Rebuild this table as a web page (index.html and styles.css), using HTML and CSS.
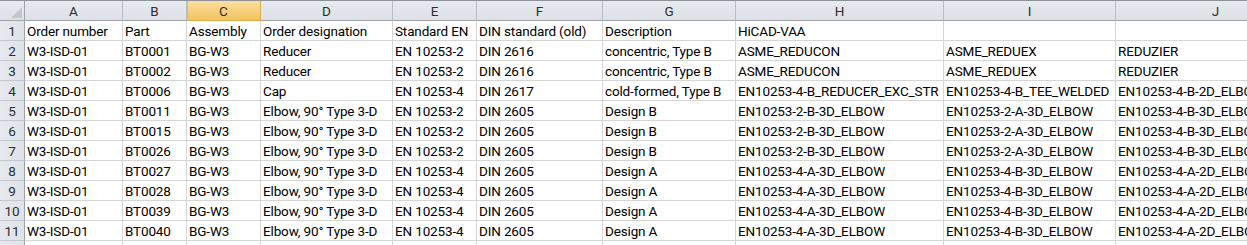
FILE: index.html
```html
<!DOCTYPE html>
<html>
<head>
<meta charset="utf-8">
<link rel="stylesheet" href="styles.css">
</head>
<body>
<div class="sheet">
  <div class="hdr corner"><svg class="tri" width="11" height="11" viewBox="0 0 11 11"><polygon points="11,0 11,11 0,11" fill="#c3c7cc"/></svg></div>
  <div class="hdr">A</div><div class="hdr">B</div><div class="hdr sel">C</div><div class="hdr">D</div><div class="hdr">E</div><div class="hdr">F</div><div class="hdr">G</div><div class="hdr">H</div><div class="hdr">I</div><div class="hdr">J</div>

  <div class="rh">1</div><div class="c">Order number</div><div class="c">Part</div><div class="c">Assembly</div><div class="c">Order designation</div><div class="c">Standard EN</div><div class="c">DIN standard (old)</div><div class="c">Description</div><div class="c">HiCAD-VAA</div><div class="c"></div><div class="c"></div>

  <div class="rh">2</div><div class="c">W3-ISD-01</div><div class="c">BT0001</div><div class="c">BG-W3</div><div class="c">Reducer</div><div class="c">EN 10253-2</div><div class="c">DIN 2616</div><div class="c">concentric, Type B</div><div class="c">ASME_REDUCON</div><div class="c">ASME_REDUEX</div><div class="c">REDUZIER</div>

  <div class="rh">3</div><div class="c">W3-ISD-01</div><div class="c">BT0002</div><div class="c">BG-W3</div><div class="c">Reducer</div><div class="c">EN 10253-2</div><div class="c">DIN 2616</div><div class="c">concentric, Type B</div><div class="c">ASME_REDUCON</div><div class="c">ASME_REDUEX</div><div class="c">REDUZIER</div>

  <div class="rh">4</div><div class="c">W3-ISD-01</div><div class="c">BT0006</div><div class="c">BG-W3</div><div class="c">Cap</div><div class="c">EN 10253-4</div><div class="c">DIN 2617</div><div class="c">cold-formed, Type B</div><div class="c">EN10253-4-B_REDUCER_EXC_STR</div><div class="c">EN10253-4-B_TEE_WELDED</div><div class="c">EN10253-4-B-2D_ELBOW</div>

  <div class="rh">5</div><div class="c">W3-ISD-01</div><div class="c">BT0011</div><div class="c">BG-W3</div><div class="c">Elbow, 90° Type 3-D</div><div class="c">EN 10253-2</div><div class="c">DIN 2605</div><div class="c">Design B</div><div class="c">EN10253-2-B-3D_ELBOW</div><div class="c">EN10253-2-A-3D_ELBOW</div><div class="c">EN10253-4-B-3D_ELBOW</div>

  <div class="rh">6</div><div class="c">W3-ISD-01</div><div class="c">BT0015</div><div class="c">BG-W3</div><div class="c">Elbow, 90° Type 3-D</div><div class="c">EN 10253-2</div><div class="c">DIN 2605</div><div class="c">Design B</div><div class="c">EN10253-2-B-3D_ELBOW</div><div class="c">EN10253-2-A-3D_ELBOW</div><div class="c">EN10253-4-B-3D_ELBOW</div>

  <div class="rh">7</div><div class="c">W3-ISD-01</div><div class="c">BT0026</div><div class="c">BG-W3</div><div class="c">Elbow, 90° Type 3-D</div><div class="c">EN 10253-2</div><div class="c">DIN 2605</div><div class="c">Design B</div><div class="c">EN10253-2-B-3D_ELBOW</div><div class="c">EN10253-2-A-3D_ELBOW</div><div class="c">EN10253-4-B-3D_ELBOW</div>

  <div class="rh">8</div><div class="c">W3-ISD-01</div><div class="c">BT0027</div><div class="c">BG-W3</div><div class="c">Elbow, 90° Type 3-D</div><div class="c">EN 10253-4</div><div class="c">DIN 2605</div><div class="c">Design A</div><div class="c">EN10253-4-A-3D_ELBOW</div><div class="c">EN10253-4-B-3D_ELBOW</div><div class="c">EN10253-4-A-2D_ELBOW</div>

  <div class="rh">9</div><div class="c">W3-ISD-01</div><div class="c">BT0028</div><div class="c">BG-W3</div><div class="c">Elbow, 90° Type 3-D</div><div class="c">EN 10253-4</div><div class="c">DIN 2605</div><div class="c">Design A</div><div class="c">EN10253-4-A-3D_ELBOW</div><div class="c">EN10253-4-B-3D_ELBOW</div><div class="c">EN10253-4-A-2D_ELBOW</div>

  <div class="rh">10</div><div class="c">W3-ISD-01</div><div class="c">BT0039</div><div class="c">BG-W3</div><div class="c">Elbow, 90° Type 3-D</div><div class="c">EN 10253-4</div><div class="c">DIN 2605</div><div class="c">Design A</div><div class="c">EN10253-4-A-3D_ELBOW</div><div class="c">EN10253-4-B-3D_ELBOW</div><div class="c">EN10253-4-A-2D_ELBOW</div>

  <div class="rh">11</div><div class="c">W3-ISD-01</div><div class="c">BT0040</div><div class="c">BG-W3</div><div class="c">Elbow, 90° Type 3-D</div><div class="c">EN 10253-4</div><div class="c">DIN 2605</div><div class="c">Design A</div><div class="c">EN10253-4-A-3D_ELBOW</div><div class="c">EN10253-4-B-3D_ELBOW</div><div class="c">EN10253-4-A-2D_ELBOW</div>

  <div class="rh">12</div><div class="c"></div><div class="c"></div><div class="c"></div><div class="c"></div><div class="c"></div><div class="c"></div><div class="c"></div><div class="c"></div><div class="c"></div><div class="c"></div>
</div>
</body>
</html>
```

FILE: styles.css
```css
html, body {
  margin: 0;
  padding: 0;
  background: #ffffff;
  overflow: hidden;
}

body {
  width: 1247px;
  height: 245px;
}

.sheet {
  display: grid;
  grid-template-columns: 25px 98px 64px 74px 132px 84px 126px 133px 208px 172px 200px;
  grid-template-rows: 20px;
  grid-auto-rows: 20px;
  width: 1316px;
  border-top: 1px solid #8f9399;
  font-family: Roboto, "Liberation Sans", sans-serif;
  font-size: 13.5px;
  color: #000000;
}

.hdr {
  box-sizing: border-box;
  background: linear-gradient(#e7eaee, #dde1e6);
  border-right: 1px solid #b7bcc3;
  border-bottom: 1px solid #9ea3aa;
  color: #2e2e2e;
  text-align: center;
  line-height: 18px;
  padding-top: 1px;
  overflow: hidden;
}

.hdr.sel {
  background: linear-gradient(#fbdd9c, #f2c45f);
  border-right-color: #e2a948;
  border-bottom-color: #e2a948;
  box-shadow: inset 1px 0 0 #e9b95a;
}

.corner {
  display: flex;
  align-items: flex-end;
  justify-content: flex-end;
  padding: 0 2px 2px 0;
  border-right-color: #9ea3aa;
}

.tri {
  display: block;
}

.rh {
  box-sizing: border-box;
  background: linear-gradient(90deg, #e6e9ed, #dfe3e8);
  border-right: 1px solid #9ea3aa;
  border-bottom: 1px solid #c3c8ce;
  color: #2e2e2e;
  text-align: center;
  line-height: 18px;
  padding-top: 1px;
  font-size: 13.5px;
  overflow: hidden;
}

.c {
  box-sizing: border-box;
  border-right: 1px solid #d6d6d6;
  border-bottom: 1px solid #d6d6d6;
  padding: 1px 0 0 2px;
  line-height: 18px;
  letter-spacing: -0.15px;
  white-space: nowrap;
  overflow: hidden;
}
```
